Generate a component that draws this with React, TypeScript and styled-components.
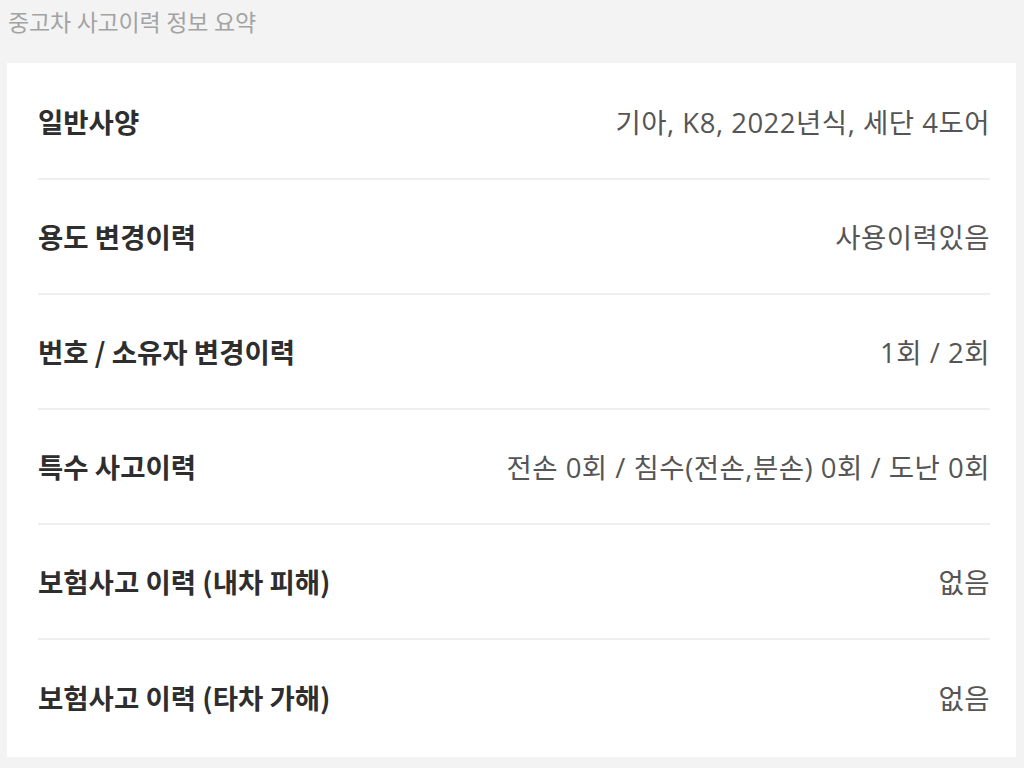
import React from "react"
import styled, { createGlobalStyle } from "styled-components"

const GlobalStyle = createGlobalStyle`
html, body {
  margin: 0;
  padding: 0;
  background: #f3f3f3;
  font-family: "Noto Sans CJK KR", "Noto Sans", sans-serif;
}
`

const Page = styled.div`
width: 1024px;
height: 768px;
box-sizing: border-box;
padding: 6px 8px 0 7px;
overflow: hidden;
`

const Title = styled.h2`
margin: 0 0 0 1px;
font-family: "Noto Sans", "Noto Sans CJK KR", sans-serif;
font-size: 23px;
line-height: 32px;
font-weight: 400;
color: #a3a3a3;
letter-spacing: -0.2px;
`

const Card = styled.div`
margin-top: 25px;
background: #ffffff;
padding: 2px 26px 0 31px;
height: 694px;
box-sizing: border-box;
`

const Row = styled.div<{ last?: boolean }>`
display: flex;
align-items: center;
justify-content: space-between;
height: 115px;
box-sizing: border-box;
border-bottom: ${p => (p.last ? "none" : "2px solid #efefef")};
padding-bottom: 2px;
`

const Label = styled.span`
font-size: 27.5px;
font-weight: 700;
color: #2e2e2e;
letter-spacing: 0;
`

const Value = styled.span`
font-family: "Open Sans", "Noto Sans CJK KR", sans-serif;
font-size: 27.5px;
font-weight: 400;
color: #555555;
letter-spacing: 0.5px;
`

const rows = [
  { label: "일반사양", value: "기아, K8, 2022년식, 세단 4도어" },
  { label: "용도 변경이력", value: "사용이력있음" },
  { label: "번호 / 소유자 변경이력", value: "1회 / 2회" },
  { label: "특수 사고이력", value: "전손 0회 / 침수(전손,분손) 0회 / 도난 0회" },
  { label: "보험사고 이력 (내차 피해)", value: "없음" },
  { label: "보험사고 이력 (타차 가해)", value: "없음" },
]

const App: React.FC = () => {
  return (
    <>
      <GlobalStyle />
      <Page>
        <Title>중고차 사고이력 정보 요약</Title>
        <Card>
          {rows.map((r, i) => (
            <Row key={r.label} last={i === rows.length - 1}>
              <Label>{r.label}</Label>
              <Value>{r.value}</Value>
            </Row>
          ))}
        </Card>
      </Page>
    </>
  )
}

export default App
